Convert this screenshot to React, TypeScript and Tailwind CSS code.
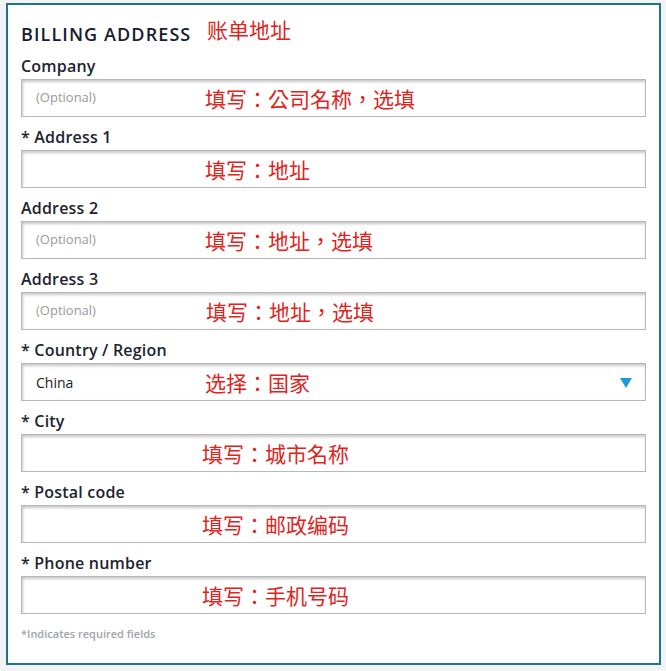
const latin = "font-['Open_Sans','Liberation_Sans',sans-serif]";
const cjk = "font-['Noto_Sans_CJK_TC','Noto_Sans_CJK_SC',sans-serif]";

type Field = {
  label: string;
  note: string;
  noteLeft: string;
  placeholder?: string;
  value?: string;
  select?: boolean;
};

const fields: Field[] = [
  { label: "Company", note: "填写：公司名称，选填", noteLeft: "left-[183px]", placeholder: "(Optional)" },
  { label: "* Address 1", note: "填写：地址", noteLeft: "left-[183px]" },
  { label: "Address 2", note: "填写：地址，选填", noteLeft: "left-[183px]", placeholder: "(Optional)" },
  { label: "Address 3", note: "填写：地址，选填", noteLeft: "left-[184px]", placeholder: "(Optional)" },
  { label: "* Country / Region", note: "选择：国家", noteLeft: "left-[183px]", value: "China", select: true },
  { label: "* City", note: "填写：城市名称", noteLeft: "left-[180px]" },
  { label: "* Postal code", note: "填写：邮政编码", noteLeft: "left-[180px]" },
  { label: "* Phone number", note: "填写：手机号码", noteLeft: "left-[180px]" },
];

function FieldRow({ f }: { f: Field }) {
  return (
    <div className="mb-[10px]">
      <div className={`${latin} mb-[3px] h-[20px] text-[16px] leading-[20px] font-semibold tracking-[0.2px] text-[#1c2430]`}>
        {f.label}
      </div>
      <div className="relative flex h-[38px] items-center border border-[#b8b8b8] bg-white pl-[14px] shadow-[inset_1px_2px_3px_rgba(0,0,0,0.22)]">
        {f.placeholder ? (
          <span className={`${latin} text-[13px] text-[#9a9a9a]`}>{f.placeholder}</span>
        ) : null}
        {f.value ? <span className={`${latin} text-[14px] text-[#222]`}>{f.value}</span> : null}
        <span className={`${cjk} absolute top-1/2 -translate-y-1/2 ${f.noteLeft} text-[21px] leading-none text-[#e0231c]`}>
          {f.note}
        </span>
        {f.select ? (
          <svg className="absolute right-[13px] top-[14px]" width="12" height="10" viewBox="0 0 12 10">
            <path d="M0 0 H12 L6 10 Z" fill="#1a9bd7" />
          </svg>
        ) : null}
      </div>
    </div>
  );
}

export default function App() {
  return (
    <div className="h-[671px] w-[666px] bg-[#f2f3f5] pt-[3px] pl-[6px]">
      <div className="h-[662px] w-[655px] border-2 border-[#1f7587] bg-white px-[13px] pt-[17px]">
        <div className="mb-[10px] flex h-[24px] items-center">
          <h2 className={`${latin} w-[186px] text-[18px] font-semibold tracking-[1.1px] text-[#15202e]`}>BILLING ADDRESS</h2>
          <span className={`${cjk} -mt-[10px] text-[21px] leading-none text-[#e0231c]`}>账单地址</span>
        </div>
        {fields.map((f) => (
          <FieldRow key={f.label} f={f} />
        ))}
        <p className={`${latin} mt-[13px] text-[11px] leading-[14px] font-semibold text-[#a0a4aa]`}>
          *Indicates required fields
        </p>
      </div>
    </div>
  );
}
